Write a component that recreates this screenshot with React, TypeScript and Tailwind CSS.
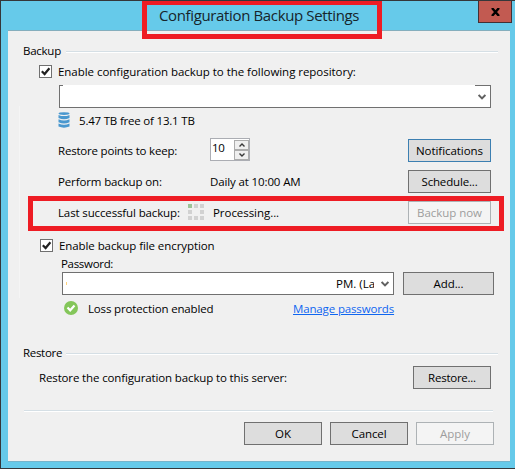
import type { ReactNode } from "react";

const CheckBox = () => (
  <span className="-mt-px h-[13px] w-[13px] shrink-0 border border-[#707070] bg-white">
    <svg viewBox="0 0 11 11" className="block h-[11px] w-[11px]">
      <path d="M1.8 5.2 4.6 8 9.4 2.2" fill="none" stroke="#212121" strokeWidth="2.2" />
    </svg>
  </span>
);

const Chevron = () => (
  <svg viewBox="0 0 8 6" className="h-[6px] w-[8px] shrink-0">
    <path d="M.6 1 4 4.4 7.4 1" fill="none" stroke="#606060" strokeWidth="2" />
  </svg>
);

const Arrow = ({ up = false }: { up?: boolean }) => (
  <span className="flex h-[10px] w-[15px] items-center justify-center border border-[#acacac] bg-[#efefef]">
    <svg viewBox="0 0 6 4" className="h-[4px] w-[6px]">
      <path d={up ? "M.5 3.5 3 1 5.5 3.5" : "M.5 .5 3 3 5.5 .5"} fill="none" stroke="#383838" strokeWidth="1.4" />
    </svg>
  </span>
);

const Button = ({ children, className = "", kind = "normal" }: { children: ReactNode; className?: string; kind?: "normal" | "focus" | "disabled" }) => {
  const look = {
    normal: "border-[#707070] bg-[#dddddd] text-black",
    focus: "border-[#3c7fb1] bg-[#dddddd] text-black",
    disabled: "border-[#adb2b5] bg-[#f4f4f4] text-[#9d9d9d]",
  }[kind];
  return <button className={`flex h-[23px] shrink-0 items-center justify-center border leading-none ${look} ${className}`}>{children}</button>;
};

const Rule = ({ className = "" }: { className?: string }) => (
  <span className={`h-[2px] flex-1 border-b border-white bg-[#d5dfe5] ${className}`} />
);

const Database = () => (
  <svg viewBox="0 0 12 16" className="h-4 w-3 shrink-0">
    <ellipse cx="6" cy="1.6" rx="5.5" ry="1.4" fill="#4a98cf" />
    <path d="M.5 2.9Q6 5.3 11.5 2.9V6.1Q6 8.5.5 6.1ZM.5 7.3Q6 9.7 11.5 7.3V10.3Q6 12.7.5 10.3ZM.5 11.5Q6 13.9 11.5 11.5V14.6Q6 16.8.5 14.6Z" fill="#4a98cf" />
  </svg>
);

const Spinner = () => (
  <svg viewBox="0 0 16 16" className="-mt-px h-4 w-4 shrink-0" shapeRendering="crispEdges">
    <path d="M6 0h4v4H6zM12 0h4v4h-4zM0 6h4v4H0zM12 6h4v4h-4zM0 12h4v4H0zM6 12h4v4H6zM12 12h4v4h-4z" fill="#d1d1d1" />
    <path d="M0 0h4v4H0z" fill="#9bc497" />
  </svg>
);

export default function App() {
  return (
    <div className="h-[470px] w-[515px] bg-white font-['Open_Sans','Noto_Sans',sans-serif] text-[11.5px] leading-4 whitespace-nowrap text-black">
      <div className="relative flex h-[469px] flex-col overflow-hidden border-y border-l border-[#35373a] bg-[#66caea] pr-[5px] pl-[7px]">
        <header className="flex h-[29px] shrink-0 items-start">
          <h1 className="ml-[151px] pt-1 text-[15px] leading-5 tracking-[-0.36px] text-[#17252a]">Configuration Backup Settings</h1>
          <button className="-mt-px -mr-[2px] ml-auto flex h-[23px] w-[34px] items-center justify-center border border-[#433035] bg-[#c25a51]">
            <svg viewBox="0 0 9 8" className="h-2 w-[9px]">
              <path d="M1 0 8 8M8 0 1 8" stroke="#000" strokeWidth="2.4" />
            </svg>
          </button>
        </header>

        <main className="flex h-[432px] shrink-0 flex-col border-y border-t-[#85aebd] border-b-[#76b4cb] bg-[#f0f0f0]">
          <section className="flex flex-col">
            <div className="mt-[12px] flex h-4 items-center pr-[12px] pl-[15px]">
              <h2 className="w-[43px] tracking-[-0.25px]">Backup</h2>
              <Rule className="mt-[2px]" />
            </div>
            <div className="mt-[5px] flex h-4 items-center pl-[31px]">
              <CheckBox />
              <span className="ml-[6px] tracking-[-0.04px]">Enable configuration backup to the following repository:</span>
            </div>
            <div className="mt-[5px] ml-[51px] flex h-[23px] w-[432px] items-center justify-end border border-[#707070] bg-white pr-[4px] pt-px">
              <Chevron />
            </div>
            <div className="mt-1 flex h-4 items-center pl-[50px]">
              <Database />
              <span className="ml-[9px] pt-px tracking-[-0.2px]">5.47 TB free of 13.1 TB</span>
            </div>
            <div className="mt-[10px] flex h-6 items-end pr-[19px] pl-[50px]">
              <span className="mb-[3px] w-[152px] tracking-[-0.2px]">Restore points to keep:</span>
              <div className="mb-px flex h-[23px] w-[40px] items-center justify-between border border-[#abadb3] bg-white pl-px">
                <span className="pb-[3px] tracking-[-0.3px]">10</span>
                <div className="flex flex-col">
                  <Arrow up />
                  <Arrow />
                </div>
              </div>
              <Button kind="focus" className="ml-auto w-[83px] tracking-[-0.05px]">Notifications</Button>
            </div>
            <div className="mt-2 flex h-[23px] items-center pr-[19px] pl-[50px]">
              <span className="w-[152px] tracking-[-0.13px]">Perform backup on:</span>
              <span className="tracking-[-0.13px]">Daily at 10:00 AM</span>
              <Button className="ml-auto w-[83px] tracking-[-0.17px]">Schedule...</Button>
            </div>
            <div className="mt-2 flex h-[23px] items-center pr-[19px] pl-[50px]">
              <span className="w-[130px] tracking-[-0.13px]">Last successful backup:</span>
              <Spinner />
              <span className="ml-[9px] tracking-[-0.05px]">Processing...</span>
              <Button kind="disabled" className="ml-auto w-[83px] tracking-[-0.04px]">Backup now</Button>
            </div>
            <div className="mt-[14px] flex h-4 items-center pl-[32px]">
              <CheckBox />
              <span className="ml-[6px] tracking-[-0.08px]">Enable backup file encryption</span>
            </div>
            <div className="mt-[2px] pl-[53px] tracking-[-0.31px]">Password:</div>
            <div className="flex h-[23px] gap-[9px] pl-[54px]">
              <div className="flex w-[332px] items-center border border-[#707070] bg-white pr-[4px] pl-[3px]">
                <span className="h-[3px] w-px bg-[#ffd27a]" />
                <span className="ml-[269px] w-[38px] overflow-hidden">PM. (La</span>
                <span className="ml-auto flex pt-px"><Chevron /></span>
              </div>
              <Button className="w-[91px] tracking-[-0.06px]">Add...</Button>
            </div>
            <div className="mt-[6px] flex h-4 items-center pl-14">
              <svg viewBox="0 0 14 14" className="-mt-[2px] h-[14px] w-[14px] shrink-0">
                <circle cx="7" cy="7" r="7" fill="#84c65a" />
                <path d="M3.5 6.5 6.2 9.3 10.5 4.6" fill="none" stroke="#fff" strokeWidth="2.2" />
              </svg>
              <span className="ml-[10px] w-[205px] tracking-[-0.15px]">Loss protection enabled</span>
              <a className="tracking-[-0.14px] text-[#0f66f0] underline underline-offset-1">Manage passwords</a>
            </div>
          </section>

          <section className="mt-7 flex flex-col">
            <div className="flex h-4 items-center pr-[12px] pl-[15px]">
              <h2 className="w-[43px] tracking-[-0.31px]">Restore</h2>
              <Rule className="mt-[2px]" />
            </div>
            <div className="mt-[5px] flex h-[23px] items-center justify-between pr-[19px] pl-[31px]">
              <span className="tracking-[-0.136px]">Restore the configuration backup to this server:</span>
              <Button className="w-[78px] tracking-[-0.25px]">Restore...</Button>
            </div>
          </section>

          <footer className="mt-[21px] flex flex-col pr-4 pl-4">
            <div className="flex h-[2px] pr-px"><Rule /></div>
            <div className="mt-[10px] flex justify-end gap-2">
              <Button className="w-[78px]">OK</Button>
              <Button className="w-[78px] tracking-[-0.1px]">Cancel</Button>
              <Button kind="disabled" className="w-[78px]">Apply</Button>
            </div>
          </footer>
        </main>

        <div className="absolute -top-px left-[141px] h-[39px] w-[240px] border-[5px] border-[#ee1c24]" />
        <div className="absolute top-[195px] left-[27px] h-[35px] w-[476px] border-[5px] border-[#ee1c24]" />
        <div className="absolute top-[84px] left-[62px] h-px w-[412px] bg-white" />
        <div className="absolute top-[105px] left-[18px] h-[192px] w-px bg-[#f5f5f5]" />
      </div>
    </div>
  );
}
